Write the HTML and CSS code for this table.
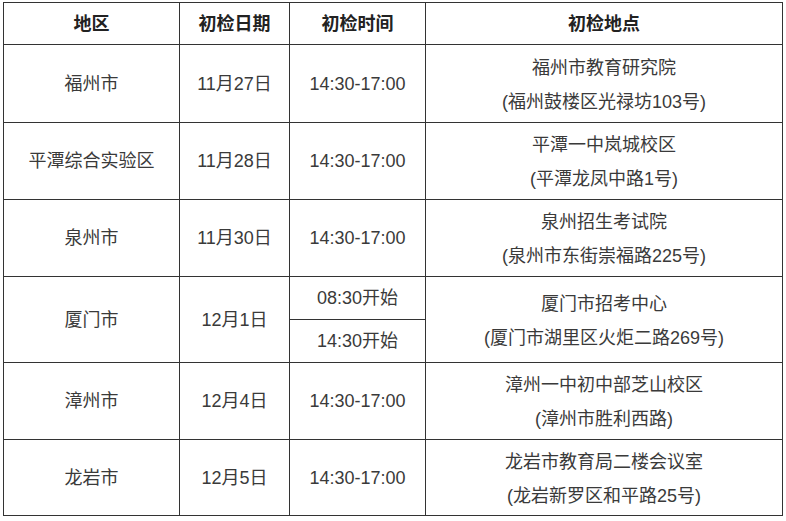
FILE: index.html
```html
<!DOCTYPE html>
<html lang="zh-CN">
<head>
<meta charset="utf-8">
<title>初检安排</title>
<link rel="stylesheet" href="styles.css">
</head>
<body>
<div class="sheet">
  <div class="cell head">地区</div>
  <div class="cell head">初检日期</div>
  <div class="cell head">初检时间</div>
  <div class="cell head">初检地点</div>

  <div class="cell">福州市</div>
  <div class="cell">11月27日</div>
  <div class="cell">14:30-17:00</div>
  <div class="cell place"><span>福州市教育研究院</span><span>(福州鼓楼区光禄坊103号)</span></div>

  <div class="cell">平潭综合实验区</div>
  <div class="cell">11月28日</div>
  <div class="cell">14:30-17:00</div>
  <div class="cell place"><span>平潭一中岚城校区</span><span>(平潭龙凤中路1号)</span></div>

  <div class="cell">泉州市</div>
  <div class="cell">11月30日</div>
  <div class="cell">14:30-17:00</div>
  <div class="cell place"><span>泉州招生考试院</span><span>(泉州市东街崇福路225号)</span></div>

  <div class="cell span2">厦门市</div>
  <div class="cell span2">12月1日</div>
  <div class="cell">08:30开始</div>
  <div class="cell place span2"><span>厦门市招考中心</span><span>(厦门市湖里区火炬二路269号)</span></div>
  <div class="cell">14:30开始</div>

  <div class="cell">漳州市</div>
  <div class="cell">12月4日</div>
  <div class="cell">14:30-17:00</div>
  <div class="cell place"><span>漳州一中初中部芝山校区</span><span>(漳州市胜利西路)</span></div>

  <div class="cell">龙岩市</div>
  <div class="cell">12月5日</div>
  <div class="cell">14:30-17:00</div>
  <div class="cell place"><span>龙岩市教育局二楼会议室</span><span>(龙岩新罗区和平路25号)</span></div>
</div>
</body>
</html>
```
FILE: styles.css
```css
html, body {
  margin: 0;
  padding: 0;
  background: #ffffff;
}

body {
  padding: 2px 0 0 3px;
  font-family: "Liberation Sans", "Noto Sans CJK SC", sans-serif;
  font-size: 18px;
  color: #3a3a3a;
}

.sheet {
  display: grid;
  grid-template-columns: 175px 109px 135px 356px;
  grid-template-rows: 41px 77px 76px 76px 42px 42px 76px 75px;
  gap: 1px;
  padding: 1px;
  width: max-content;
  background: #333333;
}

.cell {
  background: #ffffff;
  display: flex;
  flex-direction: column;
  align-items: center;
  justify-content: center;
  text-align: center;
  line-height: 24px;
  white-space: nowrap;
}

.head {
  font-weight: bold;
  color: #222222;
}

.place {
  line-height: 34px;
  padding-top: 2px;
}

.span2 {
  grid-row: span 2;
}
```
